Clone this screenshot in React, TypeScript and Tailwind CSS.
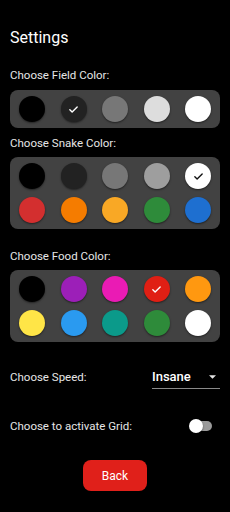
import { useState } from 'react';

type Swatch = { color: string; check?: 'light' | 'dark' };

const fieldColors: Swatch[] = [
  { color: '#000000' },
  { color: '#222222', check: 'light' },
  { color: '#777777' },
  { color: '#dddddd' },
  { color: '#ffffff' },
];

const snakeColors: Swatch[] = [
  { color: '#000000' },
  { color: '#222222' },
  { color: '#777777' },
  { color: '#9e9e9e' },
  { color: '#ffffff', check: 'dark' },
  { color: '#d32f2f' },
  { color: '#f57c00' },
  { color: '#f9a825' },
  { color: '#2e8b3a' },
  { color: '#1e6fd0' },
];

const foodColors: Swatch[] = [
  { color: '#000000' },
  { color: '#9c1fb8' },
  { color: '#ea1bb4' },
  { color: '#e01f14', check: 'light' },
  { color: '#ff9810' },
  { color: '#ffe547' },
  { color: '#2a9af0' },
  { color: '#0b9a8a' },
  { color: '#2e8b3a' },
  { color: '#ffffff' },
];

function Circle({ swatch }: { swatch: Swatch }) {
  return (
    <div
      className="flex h-[26px] w-[26px] items-center justify-center rounded-full shadow-[0_1px_2px_rgba(0,0,0,0.5)]"
      style={{ backgroundColor: swatch.color }}
    >
      {swatch.check && (
        <svg viewBox="0 0 24 24" className="h-[11px] w-[11px]" fill="none">
          <path
            d="M4 12.5l5 5L20 6.5"
            stroke={swatch.check === 'light' ? '#ffffff' : '#111111'}
            strokeWidth="3"
            strokeLinecap="round"
            strokeLinejoin="round"
          />
        </svg>
      )}
    </div>
  );
}

function Palette({ colors }: { colors: Swatch[] }) {
  const rows: Swatch[][] = [];
  for (let i = 0; i < colors.length; i += 5) rows.push(colors.slice(i, i + 5));
  return (
    <div className="flex flex-col gap-[8px] rounded-[8px] bg-[#424242] px-[9px] py-[6px]">
      {rows.map((row, i) => (
        <div key={i} className="flex justify-between">
          {row.map((s, j) => (
            <Circle key={j} swatch={s} />
          ))}
        </div>
      ))}
    </div>
  );
}

export default function App() {
  const [grid, setGrid] = useState(false);

  return (
    <main className="min-h-[512px] w-[230px] bg-black px-[10px] pt-[28px] font-['Roboto',sans-serif] text-white">
      <h1 className="text-[16px] leading-[20px]">Settings</h1>

      <p className="mt-[19px] text-[11.5px] leading-[16px] text-[#e6e6e6]">Choose Field Color:</p>
      <div className="mt-[7px]">
        <Palette colors={fieldColors} />
      </div>

      <p className="mt-[7px] text-[11.5px] leading-[16px] text-[#e6e6e6]">Choose Snake Color:</p>
      <div className="mt-[6px]">
        <Palette colors={snakeColors} />
      </div>

      <p className="mt-[19px] text-[11.5px] leading-[16px] text-[#e6e6e6]">Choose Food Color:</p>
      <div className="mt-[6px]">
        <Palette colors={foodColors} />
      </div>

      <div className="mt-[23px] flex h-[24px] items-center justify-between">
        <span className="text-[11.5px] leading-[16px] text-[#e6e6e6]">Choose Speed:</span>
        <div className="flex h-[24px] w-[68px] items-center justify-between border-b border-[#8a8a8a]">
          <span className="text-[13px] font-medium leading-[16px]">Insane</span>
          <svg viewBox="0 0 10 5" className="mr-[4px] h-[4px] w-[7px]">
            <path d="M0 0h10L5 5z" fill="#e6e6e6" />
          </svg>
        </div>
      </div>

      <div className="mt-[29px] flex h-[16px] items-center justify-between">
        <span className="text-[11.5px] leading-[16px] text-[#e6e6e6]">Choose to activate Grid:</span>
        <button
          type="button"
          onClick={() => setGrid(!grid)}
          className="relative mr-[8px] h-[10px] w-[22px] rounded-full bg-[#9a9a9a]"
        >
          <span
            className={`absolute top-[-2px] h-[14px] w-[14px] rounded-full bg-white shadow-[0_1px_2px_rgba(0,0,0,0.5)] ${grid ? 'left-[9px]' : 'left-[-1px]'}`}
          />
        </button>
      </div>

      <div className="mt-[26px] flex justify-center">
        <button
          type="button"
          className="h-[31px] w-[64px] rounded-[8px] bg-[#e0201a] text-[12px] text-white"
        >
          Back
        </button>
      </div>
    </main>
  );
}
